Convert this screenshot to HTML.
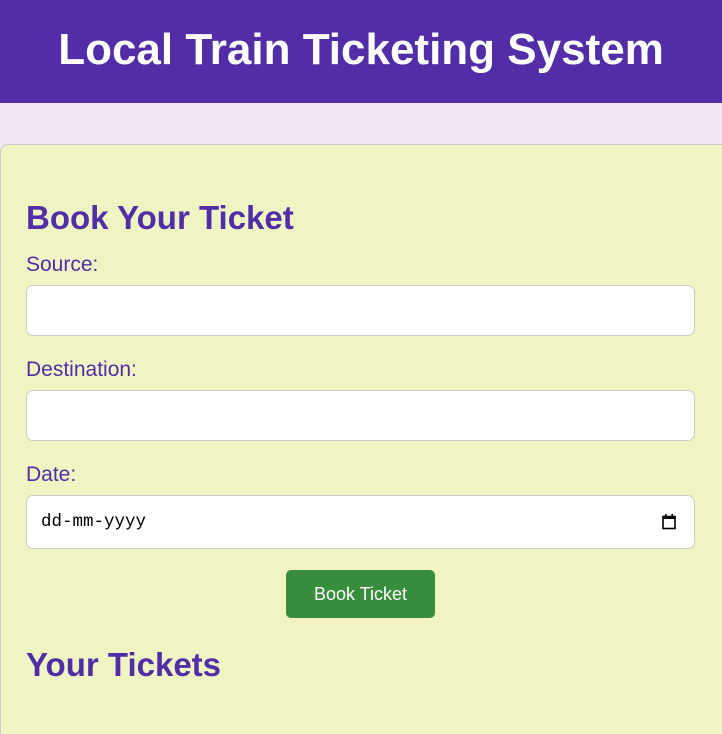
<!DOCTYPE html>
<html><head><style>
html,body{margin:0;width:722px;height:734px;overflow:hidden}
body{background:#f3e5f5;font-family:"Liberation Sans",Arial,sans-serif;position:relative}
.hdr{position:absolute;left:0;top:0;width:722px;height:103px;background:#512da8;color:#fff;font-weight:bold;font-size:44px;text-align:center;line-height:100px}
.card{position:absolute;left:0;top:144px;width:730px;height:590px;background:#f0f4c3;border:1px solid #ccc;border-bottom:none;border-radius:8px 8px 0 0;box-sizing:border-box}
.a{position:absolute;color:#512da8}
h2{margin:0;font-size:33px;font-weight:bold}
.lbl{font-size:21px}
.in{position:absolute;left:26px;width:669px;background:#fff;border:1px solid #ccc;border-radius:7px;box-sizing:border-box}
.btn{position:absolute;left:286px;top:570px;width:149px;height:48px;background:#388e3c;color:#fff;border-radius:5px;font-size:18px;text-align:center;line-height:48px}
</style></head><body>
<div class="hdr">Local Train Ticketing System</div>
<div class="card"></div>
<h2 class="a" style="left:26px;top:199px">Book Your Ticket</h2>
<div class="a lbl" style="left:26px;top:253px">Source:</div>
<div class="in" style="top:285px;height:51px"></div>
<div class="a lbl" style="left:26px;top:358px">Destination:</div>
<div class="in" style="top:390px;height:51px"></div>
<div class="a lbl" style="left:26px;top:463px">Date:</div>
<div class="in" style="top:495px;height:54px"><span style="position:absolute;left:14px;top:16px;font-family:'Liberation Mono',monospace;font-size:17.5px;color:#000">dd-mm-yyyy</span>
<svg style="position:absolute;left:634px;top:17px" width="16" height="18" viewBox="0 0 16 18"><rect x="2" y="3.5" width="12" height="12" fill="none" stroke="#000" stroke-width="1.6"/><rect x="2" y="3" width="12" height="3" fill="#000"/><rect x="4" y="1" width="1.6" height="3" fill="#000"/><rect x="10.4" y="1" width="1.6" height="3" fill="#000"/></svg></div>
<div class="btn">Book Ticket</div>
<h2 class="a" style="left:26px;top:646px">Your Tickets</h2>
</body></html>
